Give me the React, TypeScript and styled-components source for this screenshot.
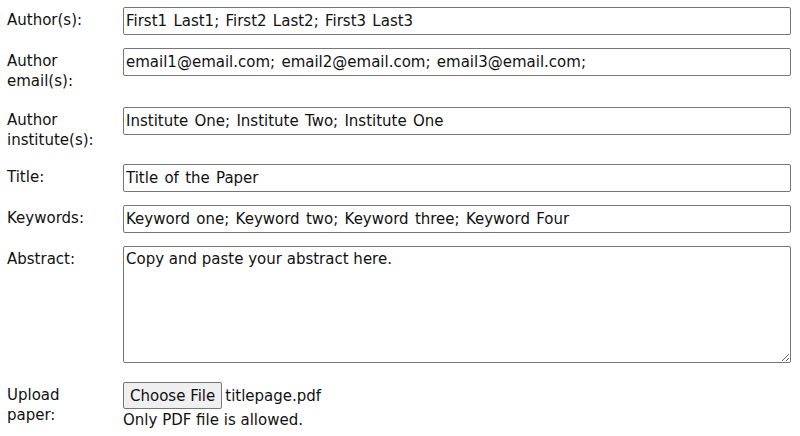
import React from "react";
import styled, { createGlobalStyle } from "styled-components";

const Global = createGlobalStyle`
  html, body { margin: 0; padding: 0; background: #ffffff; }
  body { font-family: "DejaVu Sans", Verdana, sans-serif; font-size: 15px; color: #111; }
`;

const Form = styled.form`
  display: flex;
  flex-direction: column;
  padding: 7px 9px 0 7px;
`;

const Row = styled.div<{ $gap?: number }>`
  display: grid;
  grid-template-columns: 116px 1fr;
  align-items: start;
  margin-bottom: ${(p) => p.$gap ?? 13}px;
`;

const Label = styled.label<{ $padB?: number }>`
  line-height: 20px;
  padding-top: 3px;
  padding-bottom: ${(p) => p.$padB ?? 0}px;
  color: #111;
`;

const TextInput = styled.input`
  box-sizing: border-box;
  width: 100%;
  height: 28px;
  margin: 0;
  padding: 0 2px;
  font: inherit;
  font-size: 15px;
  word-spacing: 1.5px;
  color: #111;
  border: 1px solid #767676;
  border-radius: 2px;
  background: #fff;
`;

const TextArea = styled.textarea`
  box-sizing: border-box;
  width: 100%;
  height: 117px;
  margin: 0;
  padding: 3px 2px;
  font: inherit;
  font-size: 15px;
  line-height: 18px;
  color: #111;
  border: 1px solid #767676;
  border-radius: 2px;
  background: #fff;
  resize: both;
`;

const FileCol = styled.div`
  display: flex;
  flex-direction: column;
  gap: 2px;
`;

const FileLine = styled.div`
  display: flex;
  align-items: center;
  gap: 3px;
`;

const FileButton = styled.button`
  box-sizing: border-box;
  height: 27px;
  padding: 0 6px;
  margin: 0;
  font: inherit;
  font-size: 15px;
  color: #111;
  background: #efefef;
  border: 1px solid #767676;
  border-radius: 2px;
`;

const FileName = styled.span`
  font-size: 15px;
  color: #111;
`;

const Note = styled.div`
  font-size: 15px;
  line-height: 18px;
  color: #111;
`;

export default function App() {
  return (
    <>
      <Global />
      <Form onSubmit={(e) => e.preventDefault()}>
        <Row>
          <Label>Author(s):</Label>
          <TextInput defaultValue="First1 Last1; First2 Last2; First3 Last3" />
        </Row>
        <Row>
          <Label $padB={3}>Author<br />email(s):</Label>
          <TextInput defaultValue="email1@email.com; email2@email.com; email3@email.com;" />
        </Row>
        <Row>
          <Label $padB={1}>Author<br />institute(s):</Label>
          <TextInput defaultValue="Institute One; Institute Two; Institute One" />
        </Row>
        <Row>
          <Label>Title:</Label>
          <TextInput defaultValue="Title of the Paper" />
        </Row>
        <Row>
          <Label>Keywords:</Label>
          <TextInput defaultValue="Keyword one; Keyword two; Keyword three; Keyword Four" />
        </Row>
        <Row $gap={19}>
          <Label>Abstract:</Label>
          <TextArea defaultValue="Copy and paste your abstract here." />
        </Row>
        <Row>
          <Label>Upload<br />paper:</Label>
          <FileCol>
            <FileLine>
              <FileButton type="button">Choose File</FileButton>
              <FileName>titlepage.pdf</FileName>
            </FileLine>
            <Note>Only PDF file is allowed.</Note>
          </FileCol>
        </Row>
      </Form>
    </>
  );
}
